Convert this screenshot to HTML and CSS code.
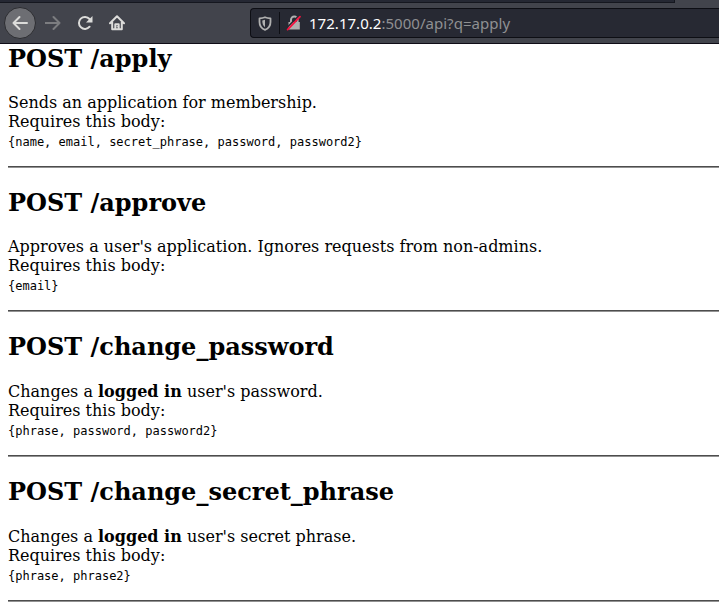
FILE: index.html
```html
<!DOCTYPE html>
<html lang="en">
<head>
<meta charset="utf-8">
<title>API</title>
<link rel="stylesheet" href="styles.css">
</head>
<body>
<header class="chrome">
  <div class="tabs"></div>
  <div class="toolbar">
    <nav class="nav">
      <span class="back"><svg width="16" height="16" viewBox="0 0 16 16"><path d="M15 8H1.5M7.5 2L1.5 8l6 6"/></svg></span>
      <svg class="forward" width="16" height="16" viewBox="0 0 16 16"><path d="M0.5 8h14M8.5 2l6 6-6 6"/></svg>
      <svg class="reload" width="16" height="16" viewBox="0 0 16 16"><path d="M12.6 11.7A6 6 0 1 1 12.5 4L14 5.5"/><path class="solid" d="M15.5 1v6.5H9z"/></svg>
      <svg class="home" width="16" height="16" viewBox="0 0 16 16"><path d="M1 8.2L8 1.2l7 7M3.2 7v7.3h9.6V7M6.3 14V9.2h3.4V14"/><path class="solid" d="M7.6 11h1.2v1.2H7.6z"/></svg>
    </nav>
    <div class="urlbar">
      <svg class="shield" width="14" height="15" viewBox="0 0 14 15"><path d="M7 1.2C5.2 2 3.2 2.3 1.5 2.4V6c0 4 2.3 6.7 5.5 7.8 3.2-1.1 5.5-3.8 5.5-7.8V2.4C10.8 2.3 8.8 2 7 1.2z"/><path class="solid" d="M7 3.8v7.4C5.2 10 4.3 8 4.3 4.6z"/></svg>
      <span class="divider"></span>
      <svg class="lock" width="16" height="16" viewBox="0 0 16 16"><path d="M5 8V4.8a3.3 3.3 0 0 1 6.6 0V8"/><path class="solid" d="M2.5 7h11.3v7.5H2.5z"/><path class="gap" d="M0.8 12.8L12.8 0.8"/><path class="slash" d="M1.6 14.6L14 1.6"/></svg>
      <span class="url"><span class="host">172.17.0.2</span>:5000/api?q=apply</span>
    </div>
  </div>
</header>
<main class="page">
  <section class="endpoint">
    <h2>POST /apply</h2>
    <p>Sends an application for membership.<br>Requires this body:</p>
    <code>{name, email, secret_phrase, password, password2}</code>
    <hr>
  </section>
  <section class="endpoint">
    <h2>POST /approve</h2>
    <p>Approves a user's application. Ignores requests from non-admins.<br>Requires this body:</p>
    <code>{email}</code>
    <hr>
  </section>
  <section class="endpoint">
    <h2>POST /change_password</h2>
    <p>Changes a <b>logged in</b> user's password.<br>Requires this body:</p>
    <code>{phrase, password, password2}</code>
    <hr>
  </section>
  <section class="endpoint">
    <h2>POST /change_secret_phrase</h2>
    <p>Changes a <b>logged in</b> user's secret phrase.<br>Requires this body:</p>
    <code>{phrase, phrase2}</code>
    <hr>
  </section>
</main>
</body>
</html>
```
FILE: styles.css
```css
* { box-sizing: border-box; }
html { overflow: hidden; }
body {
  margin: 0;
  height: 606px;
  overflow: hidden;
  background: #fff;
  color: #000;
  font-family: "DejaVu Serif", serif;
}
.chrome {
  height: 44px;
  background: #42444c;
  border-bottom: 1px solid #0e0c16;
}
.tabs {
  width: 675px;
  height: 3px;
  background: #252833;
  border-right: 1px solid #15171f;
  border-bottom: 1px solid #15171f;
}
.toolbar {
  display: flex;
  height: 40px;
  padding-top: 5px;
}
.nav {
  display: flex;
  align-items: center;
  width: 250px;
  height: 30px;
  padding-left: 4px;
}
svg {
  display: block;
  flex: none;
  fill: none;
  stroke: #dcdcda;
  stroke-width: 2;
  stroke-linecap: round;
  stroke-linejoin: round;
}
svg .solid { fill: #dcdcda; stroke: none; }
.back {
  display: flex;
  align-items: center;
  justify-content: center;
  flex: none;
  width: 32px;
  height: 32px;
  border: 1px solid #2c2d31;
  border-radius: 50%;
  background: #6d6e73;
}
.forward { margin-left: 9px; stroke: #7c7d80; }
.reload { margin-left: 16px; }
.home { margin-left: 16px; }
.urlbar {
  display: flex;
  align-items: center;
  flex: 1;
  height: 30px;
  padding-left: 7px;
  border: 1px solid #0d0e14;
  border-right: 0;
  border-radius: 4px 0 0 4px;
  background: #272933;
}
.shield { stroke: #b0b0b0; stroke-width: 1.8; }
.shield .solid, .lock .solid { fill: #b0b0b0; }
.divider { width: 1px; height: 22px; margin-left: 7px; background: #0d0e14; }
.lock { margin-left: 6px; stroke: #b0b0b0; }
.lock .gap { stroke: #272933; stroke-width: 1.6; }
.lock .slash { stroke: #f5123f; stroke-width: 1.8; }
.url {
  margin-left: 7px;
  color: #8f9092;
  font: 15px/28px "Noto Sans", sans-serif;
  letter-spacing: .03px;
  white-space: nowrap;
}
.host { color: #fff; }
.page { padding: .8px 0 0 8px; }
.endpoint { height: 144.67px; }
h2 { margin: 0 0 20px; font-size: 24px; line-height: 28px; }
.endpoint:nth-child(n+3) h2 { padding-bottom: 1px; margin-top: -1px; }
.endpoint:nth-child(n+3) { display: flow-root; }
p { margin: 0; font-size: 16px; line-height: 19px; }
code {
  display: block;
  font: 12px/19px "DejaVu Sans Mono", monospace;
  padding-top: 2px;
}
hr {
  height: 2px;
  margin: 14px 0 0;
  border: 0;
  border-top: 1px solid #4d4d4d;
  background: #929292;
}
```
